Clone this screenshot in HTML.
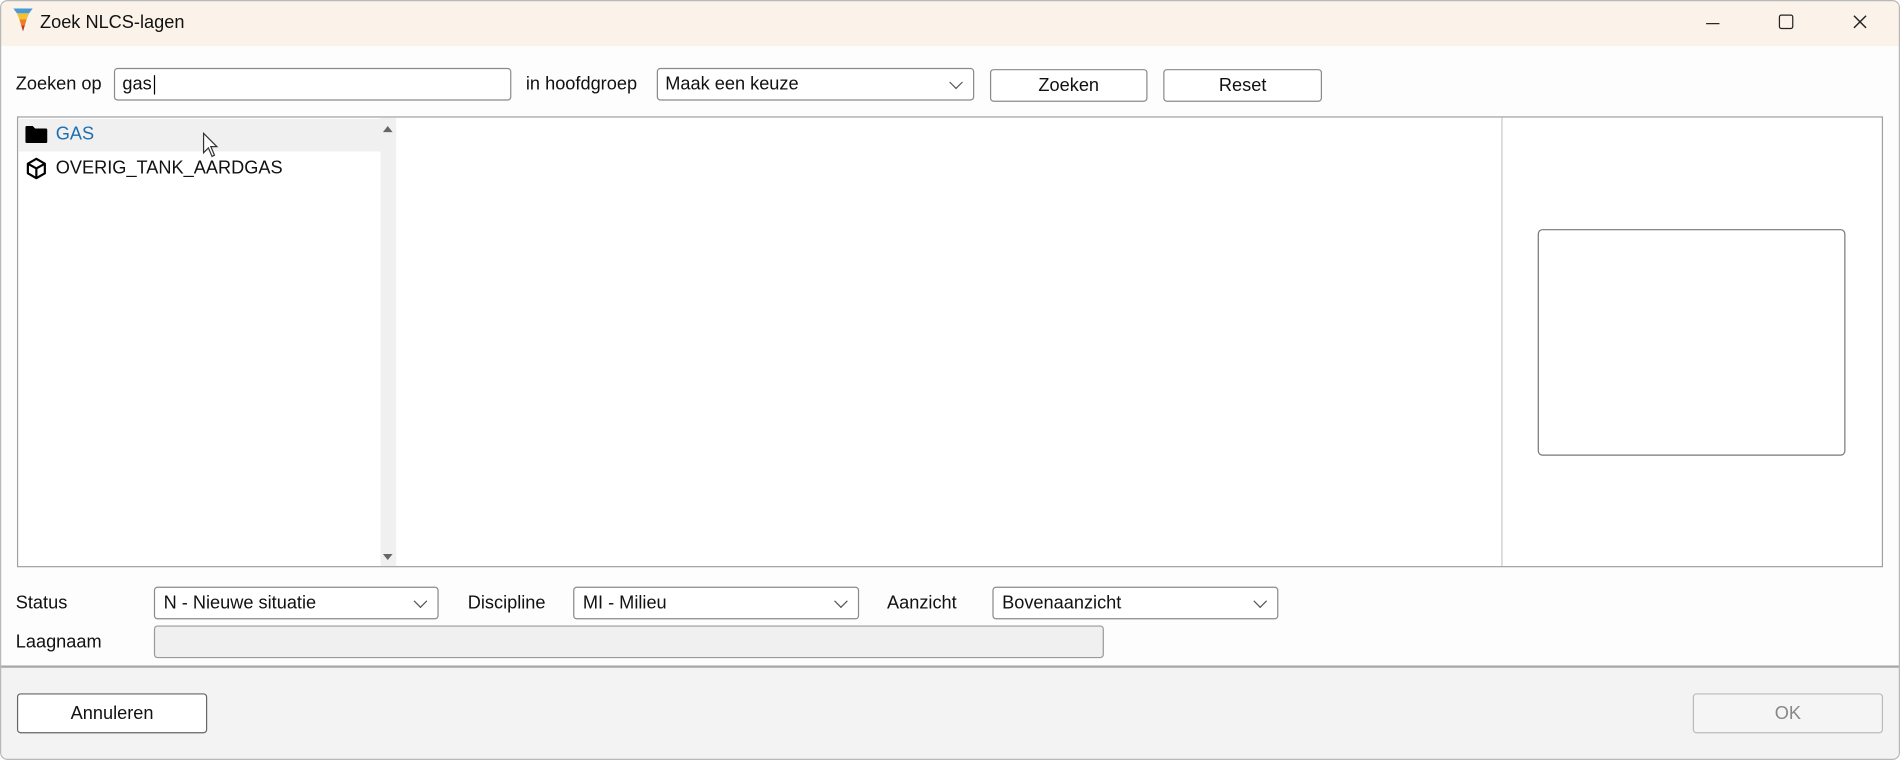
<!DOCTYPE html>
<html><head><style>
html,body{margin:0;padding:0;width:1900px;height:760px;overflow:hidden;background:#fff}
#w{position:absolute;left:0;top:0;width:1568px;height:627px;transform:scale(1.21173,1.21212);transform-origin:0 0;font-family:"Liberation Sans",sans-serif;font-size:15px;color:#111;background:#fdfdfd;overflow:hidden;border-radius:6px}
.a{position:absolute}
.t{position:absolute;line-height:18px}
.box{position:absolute;box-sizing:border-box;border:1px solid #8a8a8a;border-radius:3px;background:#fff}
.sel:after{content:"";position:absolute;right:10px;top:7px;width:7px;height:7px;border-right:1.5px solid #555;border-bottom:1.5px solid #555;transform:rotate(45deg)}
.btn{position:absolute;box-sizing:border-box;border:1px solid #8a8a8a;border-radius:3px;background:#fff;text-align:center}
</style></head><body><div id="w">
<div class="a" style="left:0;top:0;width:1568px;height:38px;background:#fbf3e9"></div>
<svg class="a" style="left:11px;top:7px" width="16" height="20" viewBox="0 0 16 20"><path d="M0 0H16L13 4H3Z" fill="#4a9ad8"/><path d="M3 4H13L11 9H5Z" fill="#f2c230"/><path d="M5 9H11L9.5 14H6.5Z" fill="#ef7d22"/><path d="M6.5 14H9.5L8 19Z" fill="#c0392b"/></svg>
<div class="t" style="left:33px;top:10px">Zoek NLCS-lagen</div>
<div class="a" style="left:1408px;top:19px;width:11px;height:1px;background:#222"></div>
<div class="a" style="left:1468px;top:12px;width:10px;height:10px;border:1px solid #222;border-radius:2px"></div>
<svg class="a" style="left:1529px;top:12px" width="12" height="12" viewBox="0 0 12 12" stroke="#222" stroke-width="1.2"><path d="M1 1L11 11M11 1L1 11"/></svg>

<div class="t" style="left:13px;top:61px">Zoeken op</div>
<div class="box" style="left:94px;top:56px;width:328px;height:27px"><span class="t" style="left:6px;top:4px">gas</span><span class="a" style="left:32px;top:5px;width:1px;height:16px;background:#000"></span></div>
<div class="t" style="left:434px;top:61px">in hoofdgroep</div>
<div class="box sel" style="left:542px;top:56px;width:262px;height:27px"><span class="t" style="left:6px;top:4px">Maak een keuze</span></div>
<div class="btn" style="left:817px;top:57px;width:130px;height:27px;line-height:25px">Zoeken</div>
<div class="btn" style="left:960px;top:57px;width:131px;height:27px;line-height:25px">Reset</div>

<div class="a" style="left:14px;top:96px;width:1540px;height:372px;box-sizing:border-box;border:1px solid #a0a0a0;background:#fff"></div>
<div class="a" style="left:1239px;top:97px;width:1px;height:370px;background:#c8c8c8"></div>
<div class="a" style="left:314px;top:97px;width:13px;height:370px;background:#f0f0f0"></div>
<div class="a" style="left:316px;top:104px;width:0;height:0;border-left:4px solid transparent;border-right:4px solid transparent;border-bottom:5px solid #666"></div>
<div class="a" style="left:316px;top:457px;width:0;height:0;border-left:4px solid transparent;border-right:4px solid transparent;border-top:5px solid #666"></div>
<div class="a" style="left:15px;top:98px;width:299px;height:27px;background:#f0f0f0"></div>
<svg class="a" style="left:20px;top:103px" width="20" height="16" viewBox="0 0 20 16"><path d="M1 2Q1 1 2 1H7L9 3H18Q19 3 19 4V14Q19 15 18 15H2Q1 15 1 14Z" fill="#000"/></svg>
<div class="t" style="left:46px;top:102px;color:#1f6fb0">GAS</div>
<svg class="a" style="left:20px;top:129px" width="20" height="20" viewBox="0 0 20 20" fill="none" stroke="#000" stroke-width="1.8" stroke-linejoin="round"><path d="M10 2L17 6V14L10 18L3 14V6Z M3 6L10 10L17 6 M10 10V18"/></svg>
<div class="t" style="left:46px;top:130px">OVERIG_TANK_AARDGAS</div>
<svg class="a" style="left:167px;top:109px" width="14" height="22" viewBox="0 0 14 22"><path d="M1 1V17L5 13L8 20L10 19L7 12H12Z" fill="#fff" stroke="#333" stroke-width="1"/></svg>
<div class="a" style="left:1269px;top:189px;width:254px;height:187px;box-sizing:border-box;border:1px solid #777;border-radius:4px;background:#fff"></div>

<div class="t" style="left:13px;top:489px">Status</div>
<div class="box sel" style="left:127px;top:484px;width:235px;height:27px"><span class="t" style="left:7px;top:4px">N - Nieuwe situatie</span></div>
<div class="t" style="left:386px;top:489px">Discipline</div>
<div class="box sel" style="left:473px;top:484px;width:236px;height:27px"><span class="t" style="left:7px;top:4px">MI - Milieu</span></div>
<div class="t" style="left:732px;top:489px">Aanzicht</div>
<div class="box sel" style="left:819px;top:484px;width:236px;height:27px"><span class="t" style="left:7px;top:4px">Bovenaanzicht</span></div>
<div class="t" style="left:13px;top:521px">Laagnaam</div>
<div class="box" style="left:127px;top:516px;width:784px;height:27px;background:#f0f0f0;border-color:#999"></div>

<div class="a" style="left:0;top:549px;width:1568px;height:2px;background:#a8a8a8"></div>
<div class="a" style="left:0;top:551px;width:1568px;height:76px;background:#f3f3f3"></div>
<div class="btn" style="left:14px;top:572px;width:157px;height:33px;line-height:31px;border-color:#666">Annuleren</div>
<div class="btn" style="left:1397px;top:572px;width:157px;height:33px;line-height:31px;background:#f5f5f5;border-color:#bbb;color:#888">OK</div>
<div class="a" style="left:0;top:0;width:1568px;height:627px;box-sizing:border-box;border:1px solid #b8b8b8;border-radius:6px"></div>
</div></body></html>
